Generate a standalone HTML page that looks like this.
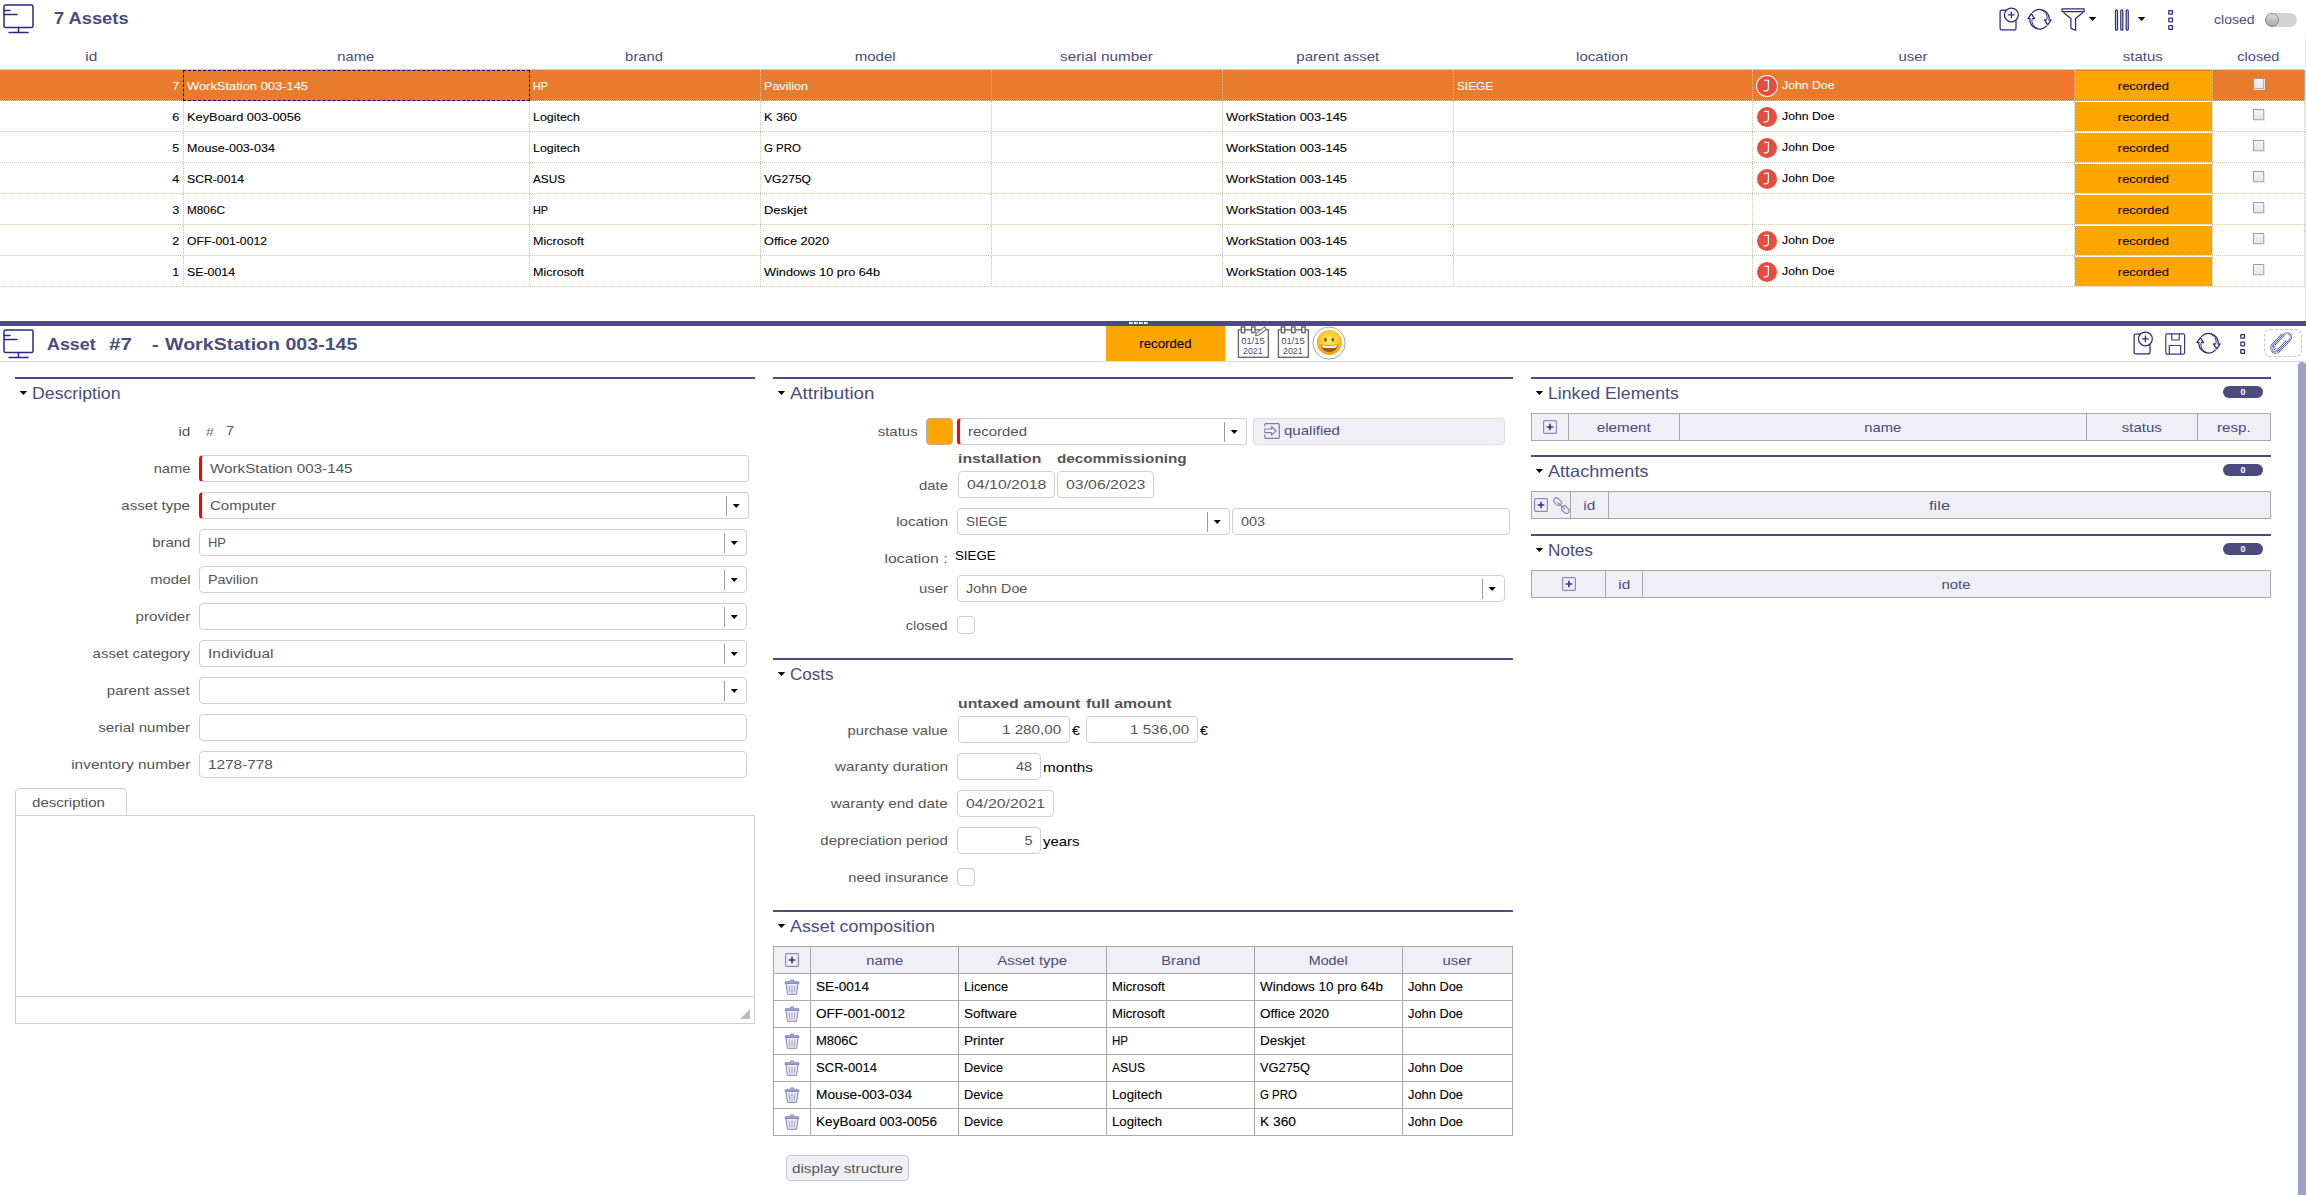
<!DOCTYPE html>
<html lang="en"><head><meta charset="utf-8"><title>Assets</title><style>
*{box-sizing:border-box;margin:0;padding:0}
html,body{width:2306px;height:1195px;overflow:hidden;background:#fff}
body{font-family:"Liberation Sans",sans-serif;color:#555;position:relative}
.abs{position:absolute}
.sx{display:inline-block;white-space:pre;transform-origin:0 50%}
.R{text-align:right} .R .sx{transform-origin:100% 50%}
.C{text-align:center} .C .sx{transform-origin:50% 50%}
.t{position:absolute;white-space:nowrap;line-height:20px;height:20px}
/* list */
.row{position:absolute;left:0;width:2305px;height:31px;border-bottom:1px dotted #cfc7ad;border-right:1px dotted #cfc7ad}
.row.sel{background:#e87b2c}
.cell{position:absolute;top:0;height:30px;line-height:30px;border-left:1px dotted #cfc7ad;padding-left:2.800px;color:#000;white-space:nowrap;overflow:hidden}
.row.sel .cell{color:#fff}
.cell.id{border-left:none;padding-right:3.800px;padding-left:0}
.st{position:absolute;left:2075px;top:1px;width:137px;height:29px;background:#ffa500;color:#000;line-height:28px}
.av{position:absolute;left:4px;top:6px;width:20px;height:20px;border-radius:50%;background:#e74c3c}
.row.sel .av{box-shadow:0 0 0 1px #fff}
.cb{position:absolute;left:2253px;top:8.300px;width:11px;height:11px;border:1px solid #b4b4b4;border-top-color:#9c9c9c;border-left-color:#9c9c9c;background:linear-gradient(#f4f4f4,#e6e6e6);box-shadow:1px 1px 0 #e4e4e4}
/* form */
.sec{position:absolute;height:2px;background:#4b4b80}
.tri{position:absolute;width:7.5px;height:4px;background:#000;clip-path:polygon(0 0,100% 0,50% 100%)}
.lbl{position:absolute;height:27px;line-height:28px;color:#555;white-space:nowrap}
.inp{position:absolute;height:27px;line-height:27px;border:1px solid #d0d0d0;border-radius:4px;background:#fff;color:#555;padding-left:8px;white-space:nowrap;overflow:hidden}
.inp.req{border-left:3px solid #f00;padding-left:8px}
.inp.R{padding-right:8px;padding-left:0}
.sep{position:absolute;top:3px;width:1px;height:20px;background:#999}
.dd{position:absolute;top:10.800px;width:7.5px;height:4.2px;background:#000;clip-path:polygon(0 0,100% 0,50% 100%)}
.chk{position:absolute;width:18px;height:18px;border:1px solid #ccc;border-radius:4px;background:#fff}
.tbl{position:absolute;border:1px solid #a8a8a8;background:#fff}
.th{position:absolute;color:#555;white-space:nowrap}
.vl{position:absolute;width:1px;background:#a8a8a8}
.hl{position:absolute;height:1px;background:#a8a8a8}
.td{position:absolute;color:#000;white-space:nowrap}
.badge{position:absolute;width:40px;height:12px;border-radius:6px;background:#4b4b80;color:#fff;font-size:9px;font-weight:bold;line-height:12px;text-align:center}
</style></head><body>
<svg class="abs" style="left:2.9px;top:4.2px" width="32" height="30" viewBox="0 0 32 30" fill="none" stroke="#2a2a80" stroke-width="1.5" stroke-linecap="round"><rect x="1" y="1" width="29" height="22.500" rx="1.500"/><path d="M1 6.500h6M1 10.500h13M15.500 23.500v5M6 28.500h19"/></svg>
<div class="t" style="left:53.8px;top:8.19px;color:#4b4b80"><span class="sx" style="font-size:16.48px;transform:scaleX(1.1105);font-weight:bold">7 Assets</span></div>
<svg class="abs" style="left:1998px;top:6px" width="24" height="26" viewBox="1998 6 24 26" fill="none" stroke="#2a2a80" stroke-width="1.25" ><g transform="translate(0 0)"><path d="M2006.100 10.100H2001.600a1.500 1.500 0 0 0-1.500 1.500V28.400a1.500 1.500 0 0 0 1.500 1.500H2014.500a1.500 1.500 0 0 0 1.500-1.500V20.300"/><circle cx="2011.400" cy="14.900" r="6.900"/><path d="M2011.400 11.600v6.600M2008.100 14.900h6.600"/></g></svg>
<svg class="abs" style="left:2026px;top:7px" width="27" height="25" viewBox="2026 7 27 25" fill="none" stroke="#2a2a80" stroke-width="1.25" ><g transform="translate(2039.5 19.25)" stroke-linecap="round"><path d="M-6.900 -6.900A9.750 9.750 0 0 1 9.700 -0.500"/><path d="M2.500 -9A7.600 7.600 0 0 1 7.600 -0.500" stroke-width="1"/><path d="M4.900 0.700h2.200M9.300 0.700h2.300L8.200 5.600 4.900 0.700" stroke-linejoin="round"/><g transform="rotate(180)"><path d="M-6.900 -6.900A9.750 9.750 0 0 1 9.700 -0.500"/><path d="M2.500 -9A7.600 7.600 0 0 1 7.600 -0.500" stroke-width="1"/><path d="M4.900 0.700h2.200M9.300 0.700h2.300L8.200 5.600 4.900 0.700" stroke-linejoin="round"/></g></g></svg>
<svg class="abs" style="left:2060px;top:6px" width="27" height="27" viewBox="2060 6 27 27" fill="none" stroke="#2a2a80" stroke-width="1.25" stroke-width="1.1"><path d="M2062.100 8.900h22v2.600h-22z" stroke-linejoin="round"/><path d="M2063.500 12.500l7.400 6.100v9.500l4.700 2.400v-11.900l7.400-6.100" stroke-linejoin="round"/></svg>
<div class="tri" style="left:2088.800px;top:17px"></div>
<svg class="abs" style="left:2113px;top:8px" width="18" height="25" viewBox="2113 8 18 25" fill="none" stroke="#2a2a80" stroke-width="1.25" stroke-width="1"><rect x="2115.5" y="9.900" width="2" height="20.300" rx="1"/><rect x="2120.8" y="9.900" width="2" height="20.300" rx="1"/><rect x="2126.2" y="9.900" width="2" height="20.300" rx="1"/></svg>
<div class="tri" style="left:2137.800px;top:17px"></div>
<svg class="abs" style="left:2166px;top:8px" width="10" height="24" viewBox="2166 8 10 24" fill="none" stroke="#2a2a80" stroke-width="1.25" ><g transform="translate(0 0)"><rect x="2168.800" y="10.5" width="3.700" height="3.700" rx=".4"/><rect x="2168.800" y="18.05" width="3.700" height="3.700" rx=".4"/><rect x="2168.800" y="25.6" width="3.700" height="3.700" rx=".4"/></g></svg>
<div class="t" style="left:2213.6px;top:9.36px;color:#4b4b80"><span class="sx" style="font-size:13.39px;transform:scaleX(1.0490)">closed</span></div>
<div class="abs" style="left:2265px;top:13px;width:32px;height:13.500px;border-radius:7px;background:#d3d3d3"></div>
<div class="abs" style="left:2264.500px;top:12.800px;width:14px;height:14px;border-radius:50%;background:linear-gradient(#dedede,#a6a6a6);border:1px solid #8c8c8c"></div>
<div class="t C" style="left:-108.5px;width:400px;top:46.06px;color:#4b4b80"><span class="sx" style="font-size:13.39px;transform:scaleX(1.1515)">id</span></div>
<div class="t C" style="left:156.0px;width:400px;top:46.06px;color:#4b4b80"><span class="sx" style="font-size:13.39px;transform:scaleX(1.1048)">name</span></div>
<div class="t C" style="left:444.5px;width:400px;top:46.06px;color:#4b4b80"><span class="sx" style="font-size:13.39px;transform:scaleX(1.1097)">brand</span></div>
<div class="t C" style="left:675.5px;width:400px;top:46.06px;color:#4b4b80"><span class="sx" style="font-size:13.39px;transform:scaleX(1.1243)">model</span></div>
<div class="t C" style="left:906.5px;width:400px;top:46.06px;color:#4b4b80"><span class="sx" style="font-size:13.39px;transform:scaleX(1.1466)">serial number</span></div>
<div class="t C" style="left:1137.5px;width:400px;top:46.06px;color:#4b4b80"><span class="sx" style="font-size:13.39px;transform:scaleX(1.1264)">parent asset</span></div>
<div class="t C" style="left:1402.5px;width:400px;top:46.06px;color:#4b4b80"><span class="sx" style="font-size:13.39px;transform:scaleX(1.1268)">location</span></div>
<div class="t C" style="left:1713.0px;width:400px;top:46.06px;color:#4b4b80"><span class="sx" style="font-size:13.39px;transform:scaleX(1.1134)">user</span></div>
<div class="t C" style="left:1943.0px;width:400px;top:46.06px;color:#4b4b80"><span class="sx" style="font-size:13.39px;transform:scaleX(1.1198)">status</span></div>
<div class="t C" style="left:2058.0px;width:400px;top:46.06px;color:#4b4b80"><span class="sx" style="font-size:13.39px;transform:scaleX(1.0852)">closed</span></div>
<div class="abs" style="left:0;top:69px;width:2304px;height:1px;background:#c8ccd4"></div>
<div class="abs" style="left:2305px;top:38px;width:1px;height:283px;background:#e4e4e4"></div>
<div class="row sel" style="top:70px"><div class="cell id R" style="left:0;width:183px"><span class="sx" style="font-size:11.33px;transform:scaleX(1.1110);-webkit-text-stroke:.1px">7</span></div><div class="cell" style="left:183px;width:346px"><span class="sx" style="font-size:11.33px;transform:scaleX(1.1391);-webkit-text-stroke:.1px">WorkStation 003-145</span></div><div class="cell" style="left:529px;width:231px"><span class="sx" style="font-size:11.33px;transform:scaleX(0.9530);-webkit-text-stroke:.1px">HP</span></div><div class="cell" style="left:760px;width:231px"><span class="sx" style="font-size:11.33px;transform:scaleX(1.1090);-webkit-text-stroke:.1px">Pavilion</span></div><div class="cell" style="left:991px;width:231px"></div><div class="cell" style="left:1222px;width:231px"></div><div class="cell" style="left:1453px;width:299px"><span class="sx" style="font-size:11.33px;transform:scaleX(1.0395);-webkit-text-stroke:.1px">SIEGE</span></div><div class="cell" style="left:1752px;width:322px"><div class="av"><svg width="20" height="20" viewBox="-10 -10 20 20" fill="none" stroke="#fff" stroke-width="1.25"><path d="M-2.800 -5.600h4.200v7.600q0 2.800-2.800 2.800h-2"/></svg></div><span style="position:absolute;left:28.600px;top:-1.100px"><span class="sx" style="font-size:11.33px;transform:scaleX(1.0825);-webkit-text-stroke:.1px">John Doe</span></span></div><div class="cell" style="left:2074px;width:138px"></div><div class="st C"><span class="sx" style="font-size:11.33px;transform:scaleX(1.1406);-webkit-text-stroke:.1px">recorded</span></div><div class="cell" style="left:2212px;width:92px"></div><div class="cb"></div><div class="abs" style="left:183px;top:0;width:347px;height:31px;border:1px solid #e87b2c"></div><div class="abs" style="left:183px;top:0;width:347px;height:31px;border:1px dashed #00008e"></div></div>
<div class="row" style="top:101px"><div class="cell id R" style="left:0;width:183px"><span class="sx" style="font-size:11.33px;transform:scaleX(1.1110);-webkit-text-stroke:.1px">6</span></div><div class="cell" style="left:183px;width:346px"><span class="sx" style="font-size:11.33px;transform:scaleX(1.1312);-webkit-text-stroke:.1px">KeyBoard 003-0056</span></div><div class="cell" style="left:529px;width:231px"><span class="sx" style="font-size:11.33px;transform:scaleX(1.0973);-webkit-text-stroke:.1px">Logitech</span></div><div class="cell" style="left:760px;width:231px"><span class="sx" style="font-size:11.33px;transform:scaleX(1.1146);-webkit-text-stroke:.1px">K 360</span></div><div class="cell" style="left:991px;width:231px"></div><div class="cell" style="left:1222px;width:231px"><span class="sx" style="font-size:11.33px;transform:scaleX(1.1391);-webkit-text-stroke:.1px">WorkStation 003-145</span></div><div class="cell" style="left:1453px;width:299px"></div><div class="cell" style="left:1752px;width:322px"><div class="av"><svg width="20" height="20" viewBox="-10 -10 20 20" fill="none" stroke="#fff" stroke-width="1.25"><path d="M-2.800 -5.600h4.200v7.600q0 2.800-2.800 2.800h-2"/></svg></div><span style="position:absolute;left:28.600px;top:-1.100px"><span class="sx" style="font-size:11.33px;transform:scaleX(1.0825);-webkit-text-stroke:.1px">John Doe</span></span></div><div class="cell" style="left:2074px;width:138px"></div><div class="st C"><span class="sx" style="font-size:11.33px;transform:scaleX(1.1406);-webkit-text-stroke:.1px">recorded</span></div><div class="cell" style="left:2212px;width:92px"></div><div class="cb"></div></div>
<div class="row" style="top:132px"><div class="cell id R" style="left:0;width:183px"><span class="sx" style="font-size:11.33px;transform:scaleX(1.1110);-webkit-text-stroke:.1px">5</span></div><div class="cell" style="left:183px;width:346px"><span class="sx" style="font-size:11.33px;transform:scaleX(1.1090);-webkit-text-stroke:.1px">Mouse-003-034</span></div><div class="cell" style="left:529px;width:231px"><span class="sx" style="font-size:11.33px;transform:scaleX(1.0973);-webkit-text-stroke:.1px">Logitech</span></div><div class="cell" style="left:760px;width:231px"><span class="sx" style="font-size:11.33px;transform:scaleX(1.0133);-webkit-text-stroke:.1px">G PRO</span></div><div class="cell" style="left:991px;width:231px"></div><div class="cell" style="left:1222px;width:231px"><span class="sx" style="font-size:11.33px;transform:scaleX(1.1391);-webkit-text-stroke:.1px">WorkStation 003-145</span></div><div class="cell" style="left:1453px;width:299px"></div><div class="cell" style="left:1752px;width:322px"><div class="av"><svg width="20" height="20" viewBox="-10 -10 20 20" fill="none" stroke="#fff" stroke-width="1.25"><path d="M-2.800 -5.600h4.200v7.600q0 2.800-2.800 2.800h-2"/></svg></div><span style="position:absolute;left:28.600px;top:-1.100px"><span class="sx" style="font-size:11.33px;transform:scaleX(1.0825);-webkit-text-stroke:.1px">John Doe</span></span></div><div class="cell" style="left:2074px;width:138px"></div><div class="st C"><span class="sx" style="font-size:11.33px;transform:scaleX(1.1406);-webkit-text-stroke:.1px">recorded</span></div><div class="cell" style="left:2212px;width:92px"></div><div class="cb"></div></div>
<div class="row" style="top:163px"><div class="cell id R" style="left:0;width:183px"><span class="sx" style="font-size:11.33px;transform:scaleX(1.1110);-webkit-text-stroke:.1px">4</span></div><div class="cell" style="left:183px;width:346px"><span class="sx" style="font-size:11.33px;transform:scaleX(1.0776);-webkit-text-stroke:.1px">SCR-0014</span></div><div class="cell" style="left:529px;width:231px"><span class="sx" style="font-size:11.33px;transform:scaleX(1.0371);-webkit-text-stroke:.1px">ASUS</span></div><div class="cell" style="left:760px;width:231px"><span class="sx" style="font-size:11.33px;transform:scaleX(1.0661);-webkit-text-stroke:.1px">VG275Q</span></div><div class="cell" style="left:991px;width:231px"></div><div class="cell" style="left:1222px;width:231px"><span class="sx" style="font-size:11.33px;transform:scaleX(1.1391);-webkit-text-stroke:.1px">WorkStation 003-145</span></div><div class="cell" style="left:1453px;width:299px"></div><div class="cell" style="left:1752px;width:322px"><div class="av"><svg width="20" height="20" viewBox="-10 -10 20 20" fill="none" stroke="#fff" stroke-width="1.25"><path d="M-2.800 -5.600h4.200v7.600q0 2.800-2.800 2.800h-2"/></svg></div><span style="position:absolute;left:28.600px;top:-1.100px"><span class="sx" style="font-size:11.33px;transform:scaleX(1.0825);-webkit-text-stroke:.1px">John Doe</span></span></div><div class="cell" style="left:2074px;width:138px"></div><div class="st C"><span class="sx" style="font-size:11.33px;transform:scaleX(1.1406);-webkit-text-stroke:.1px">recorded</span></div><div class="cell" style="left:2212px;width:92px"></div><div class="cb"></div></div>
<div class="row" style="top:194px"><div class="cell id R" style="left:0;width:183px"><span class="sx" style="font-size:11.33px;transform:scaleX(1.1110);-webkit-text-stroke:.1px">3</span></div><div class="cell" style="left:183px;width:346px"><span class="sx" style="font-size:11.33px;transform:scaleX(1.0405);-webkit-text-stroke:.1px">M806C</span></div><div class="cell" style="left:529px;width:231px"><span class="sx" style="font-size:11.33px;transform:scaleX(0.9530);-webkit-text-stroke:.1px">HP</span></div><div class="cell" style="left:760px;width:231px"><span class="sx" style="font-size:11.33px;transform:scaleX(1.1382);-webkit-text-stroke:.1px">Deskjet</span></div><div class="cell" style="left:991px;width:231px"></div><div class="cell" style="left:1222px;width:231px"><span class="sx" style="font-size:11.33px;transform:scaleX(1.1391);-webkit-text-stroke:.1px">WorkStation 003-145</span></div><div class="cell" style="left:1453px;width:299px"></div><div class="cell" style="left:1752px;width:322px"></div><div class="cell" style="left:2074px;width:138px"></div><div class="st C"><span class="sx" style="font-size:11.33px;transform:scaleX(1.1406);-webkit-text-stroke:.1px">recorded</span></div><div class="cell" style="left:2212px;width:92px"></div><div class="cb"></div></div>
<div class="row" style="top:225px"><div class="cell id R" style="left:0;width:183px"><span class="sx" style="font-size:11.33px;transform:scaleX(1.1110);-webkit-text-stroke:.1px">2</span></div><div class="cell" style="left:183px;width:346px"><span class="sx" style="font-size:11.33px;transform:scaleX(1.0767);-webkit-text-stroke:.1px">OFF-001-0012</span></div><div class="cell" style="left:529px;width:231px"><span class="sx" style="font-size:11.33px;transform:scaleX(1.1098);-webkit-text-stroke:.1px">Microsoft</span></div><div class="cell" style="left:760px;width:231px"><span class="sx" style="font-size:11.33px;transform:scaleX(1.1258);-webkit-text-stroke:.1px">Office 2020</span></div><div class="cell" style="left:991px;width:231px"></div><div class="cell" style="left:1222px;width:231px"><span class="sx" style="font-size:11.33px;transform:scaleX(1.1391);-webkit-text-stroke:.1px">WorkStation 003-145</span></div><div class="cell" style="left:1453px;width:299px"></div><div class="cell" style="left:1752px;width:322px"><div class="av"><svg width="20" height="20" viewBox="-10 -10 20 20" fill="none" stroke="#fff" stroke-width="1.25"><path d="M-2.800 -5.600h4.200v7.600q0 2.800-2.800 2.800h-2"/></svg></div><span style="position:absolute;left:28.600px;top:-1.100px"><span class="sx" style="font-size:11.33px;transform:scaleX(1.0825);-webkit-text-stroke:.1px">John Doe</span></span></div><div class="cell" style="left:2074px;width:138px"></div><div class="st C"><span class="sx" style="font-size:11.33px;transform:scaleX(1.1406);-webkit-text-stroke:.1px">recorded</span></div><div class="cell" style="left:2212px;width:92px"></div><div class="cb"></div></div>
<div class="row" style="top:256px"><div class="cell id R" style="left:0;width:183px"><span class="sx" style="font-size:11.33px;transform:scaleX(1.1110);-webkit-text-stroke:.1px">1</span></div><div class="cell" style="left:183px;width:346px"><span class="sx" style="font-size:11.33px;transform:scaleX(1.0887);-webkit-text-stroke:.1px">SE-0014</span></div><div class="cell" style="left:529px;width:231px"><span class="sx" style="font-size:11.33px;transform:scaleX(1.1098);-webkit-text-stroke:.1px">Microsoft</span></div><div class="cell" style="left:760px;width:231px"><span class="sx" style="font-size:11.33px;transform:scaleX(1.1232);-webkit-text-stroke:.1px">Windows 10 pro 64b</span></div><div class="cell" style="left:991px;width:231px"></div><div class="cell" style="left:1222px;width:231px"><span class="sx" style="font-size:11.33px;transform:scaleX(1.1391);-webkit-text-stroke:.1px">WorkStation 003-145</span></div><div class="cell" style="left:1453px;width:299px"></div><div class="cell" style="left:1752px;width:322px"><div class="av"><svg width="20" height="20" viewBox="-10 -10 20 20" fill="none" stroke="#fff" stroke-width="1.25"><path d="M-2.800 -5.600h4.200v7.600q0 2.800-2.800 2.800h-2"/></svg></div><span style="position:absolute;left:28.600px;top:-1.100px"><span class="sx" style="font-size:11.33px;transform:scaleX(1.0825);-webkit-text-stroke:.1px">John Doe</span></span></div><div class="cell" style="left:2074px;width:138px"></div><div class="st C"><span class="sx" style="font-size:11.33px;transform:scaleX(1.1406);-webkit-text-stroke:.1px">recorded</span></div><div class="cell" style="left:2212px;width:92px"></div><div class="cb"></div></div>
<div class="abs" style="left:0;top:321px;width:2306px;height:5px;background:#4b4b80"></div>
<div class="abs" style="left:1129px;top:322px;width:20px;height:2px;background:repeating-linear-gradient(90deg,#fff 0 2px,#d2d2cc 2px 4px,transparent 4px 5px)"></div>
<svg class="abs" style="left:3.1px;top:329.2px" width="32" height="30" viewBox="0 0 32 30" fill="none" stroke="#2a2a80" stroke-width="1.5" stroke-linecap="round"><rect x="1" y="1" width="29" height="22.500" rx="1.500"/><path d="M1 6.500h6M1 10.500h13M15.500 23.500v5M6 28.500h19"/></svg>
<div class="t" style="left:47px;top:334.29px;color:#4b4b80"><span class="sx" style="font-size:16.48px;transform:scaleX(1.0828);font-weight:bold">Asset</span></div>
<div class="t" style="left:108.8px;top:334.29px;color:#4b4b80"><span class="sx" style="font-size:16.48px;transform:scaleX(1.2549);font-weight:bold">#7</span></div>
<div class="t" style="left:151.6px;top:334.29px;color:#4b4b80"><span class="sx" style="font-size:16.48px;transform:scaleX(1.2028);font-weight:bold">-</span></div>
<div class="t" style="left:164.8px;top:334.29px;color:#4b4b80"><span class="sx" style="font-size:16.48px;transform:scaleX(1.1898);font-weight:bold">WorkStation 003-145</span></div>
<div class="abs" style="left:0;top:361px;width:2306px;height:1px;background:#dcdcec"></div>
<div class="abs" style="left:1106px;top:326px;width:119px;height:35px;background:#ffa500"></div>
<div class="t C" style="left:965.5px;width:400px;top:333.22px;color:#000"><span class="sx" style="font-size:12.36px;transform:scaleX(1.0702);-webkit-text-stroke:.1px">recorded</span></div>
<svg class="abs" style="left:1237px;top:326px" width="33" height="33" viewBox="0 0 33 33" fill="none" stroke="#6a6a6a" stroke-width="1.400"><rect x="1.400" y="3.800" width="30" height="27.500" fill="#fff"/><rect x="4.300" y=".9" width="3.400" height="5.800" fill="#fff"/><rect x="14.600" y=".9" width="3.400" height="5.800" fill="#fff"/><path d="M18.300 9.800L19.600 6.900 27.600 .9 29.400 3.300 21.400 9.300z" fill="#fff" stroke="#777" stroke-width="1.100" stroke-linejoin="round"/><text x="4.200" y="18.100" font-family="Liberation Sans" font-size="8.300" fill="#4b4b80" stroke="none" textLength="23.700" lengthAdjust="spacingAndGlyphs">01/15</text><text x="6" y="27.900" font-family="Liberation Sans" font-size="8.300" fill="#4b4b80" stroke="none" textLength="19.600" lengthAdjust="spacingAndGlyphs">2021</text></svg>
<svg class="abs" style="left:1277px;top:326px" width="33" height="33" viewBox="0 0 33 33" fill="none" stroke="#6a6a6a" stroke-width="1.400"><rect x="1.400" y="3.800" width="30" height="27.500" fill="#fff"/><rect x="4.300" y=".9" width="3.400" height="5.800" fill="#fff"/><rect x="14.600" y=".9" width="3.400" height="5.800" fill="#fff"/><rect x="24.800" y=".9" width="3.400" height="5.800" fill="#fff"/><text x="4.200" y="18.100" font-family="Liberation Sans" font-size="8.300" fill="#4b4b80" stroke="none" textLength="23.700" lengthAdjust="spacingAndGlyphs">01/15</text><text x="6" y="27.900" font-family="Liberation Sans" font-size="8.300" fill="#4b4b80" stroke="none" textLength="19.600" lengthAdjust="spacingAndGlyphs">2021</text></svg>
<svg class="abs" style="left:1311px;top:325px" width="36" height="36" viewBox="-1 -1 36 36"><defs><radialGradient id="sg" cx=".5" cy=".4" r=".62"><stop offset="0" stop-color="#fff06a"/><stop offset=".55" stop-color="#fccb28"/><stop offset=".85" stop-color="#f6a818"/><stop offset="1" stop-color="#e8900e"/></radialGradient></defs><circle cx="17.050" cy="17.050" r="16.100" fill="#fff" stroke="#a6a6a6" stroke-width="1"/><circle cx="17.300" cy="16.500" r="12.500" fill="url(#sg)"/><ellipse cx="13.500" cy="13.700" rx="1.350" ry="1.950" fill="#9a5000"/><ellipse cx="20.800" cy="13.700" rx="1.350" ry="1.950" fill="#9a5000"/><path d="M8.700 18.400c3 1.100 14.200 1.100 17.200 0-.6 5.300-4.300 7.500-8.600 7.500s-8-2.200-8.600-7.500z" fill="#a05a08"/><path d="M9.500 19c3 .9 12.600 .9 15.600 0-.2 1.300-.6 2-1.100 2.500-4 .8-9.400.8-13.400 0-.5-.5-.9-1.200-1.100-2.500z" fill="#f4f4f8"/></svg>
<svg class="abs" style="left:2132px;top:330px" width="24" height="26" viewBox="2132 330 24 26" fill="none" stroke="#2a2a80" stroke-width="1.25" ><g transform="translate(134 324)"><path d="M2006.100 10.100H2001.600a1.500 1.500 0 0 0-1.500 1.500V28.400a1.500 1.500 0 0 0 1.500 1.500H2014.500a1.500 1.500 0 0 0 1.500-1.500V20.300"/><circle cx="2011.400" cy="14.900" r="6.900"/><path d="M2011.400 11.600v6.600M2008.100 14.900h6.600"/></g></svg>
<svg class="abs" style="left:2164.5px;top:333px" width="21" height="22" viewBox="0 0 21 22" fill="none" stroke="#3a3a8c" stroke-width="1.200"><rect x=".8" y=".8" width="18.800" height="20.400" rx="1.500"/><path d="M6.800 1v6h7.400V1M4.300 21v-8.500h11.400V21"/></svg>
<svg class="abs" style="left:2195px;top:330.7px" width="27" height="25" viewBox="2195 330.7 27 25" fill="none" stroke="#2a2a80" stroke-width="1.25" ><g transform="translate(2208.5 342.95)" stroke-linecap="round"><path d="M-6.900 -6.900A9.750 9.750 0 0 1 9.700 -0.500"/><path d="M2.500 -9A7.600 7.600 0 0 1 7.600 -0.500" stroke-width="1"/><path d="M4.900 0.700h2.200M9.300 0.700h2.300L8.200 5.600 4.900 0.700" stroke-linejoin="round"/><g transform="rotate(180)"><path d="M-6.900 -6.900A9.750 9.750 0 0 1 9.700 -0.500"/><path d="M2.500 -9A7.600 7.600 0 0 1 7.600 -0.500" stroke-width="1"/><path d="M4.900 0.700h2.200M9.300 0.700h2.300L8.200 5.600 4.900 0.700" stroke-linejoin="round"/></g></g></svg>
<svg class="abs" style="left:2238px;top:332px" width="10" height="24" viewBox="2238 332 10 24" fill="none" stroke="#2a2a80" stroke-width="1.25" ><g transform="translate(72 324)"><rect x="2168.800" y="10.5" width="3.700" height="3.700" rx=".4"/><rect x="2168.800" y="18.05" width="3.700" height="3.700" rx=".4"/><rect x="2168.800" y="25.6" width="3.700" height="3.700" rx=".4"/></g></svg>
<div class="abs" style="left:2264px;top:329px;width:38px;height:28px;border:1px dashed #c4c4c4;border-radius:6px"></div>
<svg class="abs" style="left:2264px;top:328px" width="40" height="30" viewBox="2264 328 40 30" fill="none" stroke-linecap="butt"><g transform="rotate(-2 2281 343)"><path d="M2282.500 334.500L2272.250 344.750A4.600 4.600 0 0 0 2278.750 351.250L2290 340A3.890 3.890 0 0 0 2284.500 334.500L2274.750 344.250A3.180 3.180 0 0 0 2279.250 348.750L2286.750 341.250" stroke="#3f3f9a" stroke-width="2.100"/><path d="M2282.500 334.500L2272.250 344.750A4.600 4.600 0 0 0 2278.750 351.250L2290 340A3.890 3.890 0 0 0 2284.500 334.500L2274.750 344.250A3.180 3.180 0 0 0 2279.250 348.750L2286.750 341.250" stroke="#fff" stroke-width=".95"/></g></svg>
<div class="abs" style="left:2298px;top:362px;width:8px;height:833px;background:#a0a0c5;border-radius:4px 4px 0 0"></div>
<div class="sec" style="left:15px;top:377px;width:740px"></div>
<div class="tri" style="left:19.7px;top:390.9px"></div>
<div class="t" style="left:31.9px;top:382.89px;color:#4b4b80"><span class="sx" style="font-size:16.48px;transform:scaleX(1.0749)">Description</span></div>
<div class="t R" style="left:-210px;width:400px;top:421.36px;color:#555"><span class="sx" style="font-size:13.39px;transform:scaleX(1.1515)">id</span></div>
<div class="t" style="left:205.7px;top:421.07px;color:#777"><span class="sx" style="font-size:11.33px;transform:scaleX(1.2221);-webkit-text-stroke:.1px">#</span></div>
<div class="t" style="left:225.5px;top:420.46px;color:#555"><span class="sx" style="font-size:13.39px;transform:scaleX(1.0744)">7</span></div>
<div class="t R" style="left:-210px;width:400px;top:457.86px;color:#555"><span class="sx" style="font-size:13.39px;transform:scaleX(1.0988)">name</span></div>
<div class="inp req" style="left:199px;top:455.0px;width:550px;line-height:24.700px"><span class="sx" style="font-size:13.39px;transform:scaleX(1.1367)">WorkStation 003-145</span></div>
<div class="t R" style="left:-210px;width:400px;top:494.86px;color:#555"><span class="sx" style="font-size:13.39px;transform:scaleX(1.1257)">asset type</span></div>
<div class="inp req" style="left:199px;top:492.0px;width:550px;line-height:24.700px"><span class="sx" style="font-size:13.39px;transform:scaleX(1.1210)">Computer</span><div class="sep" style="left:523.8px"></div><div class="dd" style="left:530.5px"></div></div>
<div class="t R" style="left:-210px;width:400px;top:531.86px;color:#555"><span class="sx" style="font-size:13.39px;transform:scaleX(1.1126)">brand</span></div>
<div class="inp" style="left:199px;top:529.0px;width:548px;line-height:24.700px"><span class="sx" style="font-size:13.39px;transform:scaleX(0.9677)">HP</span><div class="sep" style="left:523.8px"></div><div class="dd" style="left:530.5px"></div></div>
<div class="t R" style="left:-210px;width:400px;top:568.86px;color:#555"><span class="sx" style="font-size:13.39px;transform:scaleX(1.1024)">model</span></div>
<div class="inp" style="left:199px;top:566.0px;width:548px;line-height:24.700px"><span class="sx" style="font-size:13.39px;transform:scaleX(1.0727)">Pavilion</span><div class="sep" style="left:523.8px"></div><div class="dd" style="left:530.5px"></div></div>
<div class="t R" style="left:-210px;width:400px;top:605.86px;color:#555"><span class="sx" style="font-size:13.39px;transform:scaleX(1.1329)">provider</span></div>
<div class="inp" style="left:199px;top:603.0px;width:548px;line-height:24.700px"><div class="sep" style="left:523.8px"></div><div class="dd" style="left:530.5px"></div></div>
<div class="t R" style="left:-210px;width:400px;top:642.86px;color:#555"><span class="sx" style="font-size:13.39px;transform:scaleX(1.1197)">asset category</span></div>
<div class="inp" style="left:199px;top:640.0px;width:548px;line-height:24.700px"><span class="sx" style="font-size:13.39px;transform:scaleX(1.1596)">Individual</span><div class="sep" style="left:523.8px"></div><div class="dd" style="left:530.5px"></div></div>
<div class="t R" style="left:-210px;width:400px;top:679.86px;color:#555"><span class="sx" style="font-size:13.39px;transform:scaleX(1.1251)">parent asset</span></div>
<div class="inp" style="left:199px;top:677.0px;width:548px;line-height:24.700px"><div class="sep" style="left:523.8px"></div><div class="dd" style="left:530.5px"></div></div>
<div class="t R" style="left:-210px;width:400px;top:716.86px;color:#555"><span class="sx" style="font-size:13.39px;transform:scaleX(1.1330)">serial number</span></div>
<div class="inp" style="left:199px;top:714.0px;width:548px;line-height:24.700px"></div>
<div class="t R" style="left:-210px;width:400px;top:753.86px;color:#555"><span class="sx" style="font-size:13.39px;transform:scaleX(1.1533)">inventory number</span></div>
<div class="inp" style="left:199px;top:751.0px;width:548px;line-height:24.700px"><span class="sx" style="font-size:13.39px;transform:scaleX(1.1470)">1278-778</span></div>
<div class="abs" style="left:15px;top:788px;width:112px;height:28px;border:1px solid #d0d0d0;border-bottom:none;border-radius:5px 5px 0 0;background:#fff"></div>
<div class="t" style="left:32px;top:792.16px;color:#555"><span class="sx" style="font-size:13.39px;transform:scaleX(1.1274)">description</span></div>
<div class="abs" style="left:15px;top:815px;width:740px;height:209px;border:1px solid #d0d0d0"></div>
<div class="abs" style="left:16px;top:996px;width:738px;height:1px;background:#d0d0d0"></div>
<div class="abs" style="left:740px;top:1009px;width:0;height:0;border-left:10px solid transparent;border-bottom:10px solid #bdbdbd"></div>
<div class="sec" style="left:773px;top:377px;width:740px"></div>
<div class="tri" style="left:777.7px;top:390.9px"></div>
<div class="t" style="left:789.9px;top:382.89px;color:#4b4b80"><span class="sx" style="font-size:16.48px;transform:scaleX(1.1389)">Attribution</span></div>
<div class="t R" style="left:518px;width:400px;top:420.86px;color:#555"><span class="sx" style="font-size:13.39px;transform:scaleX(1.1198)">status</span></div>
<div class="abs" style="left:926px;top:418px;width:27px;height:27px;border-radius:4px;background:#ffa500;border:1px solid #b9b09c"></div>
<div class="inp req" style="left:957px;top:418.0px;width:290px;line-height:24.700px"><span class="sx" style="font-size:13.39px;transform:scaleX(1.1165)">recorded</span><div class="sep" style="left:263.8px"></div><div class="dd" style="left:270.5px"></div></div>
<div class="abs" style="left:1253px;top:418px;width:252px;height:27px;border-radius:4px;background:#f0eff6;border:1px solid #dcdce4"></div>
<svg class="abs" style="left:1263.7px;top:422.7px" width="17" height="17" viewBox="0 0 17 17" fill="none" stroke="#7c7cb4" stroke-width="1.200" stroke-linejoin="round"><path d="M.8 3.600V1.700a1 1 0 0 1 1-1H14.300a1 1 0 0 1 1 1V14.300a1 1 0 0 1-1 1H1.800a1 1 0 0 1-1-1V11.600"/><path d="M1.900 6H7.600V3.700L12.100 7.900 7.600 12.100V9.700H1.900a1.850 1.850 0 0 1 0-3.700z"/></svg>
<div class="t" style="left:1284px;top:420.36px;color:#4b4b80"><span class="sx" style="font-size:13.39px;transform:scaleX(1.1228)">qualified</span></div>
<div class="t" style="left:958px;top:448.06px;color:#555"><span class="sx" style="font-size:13.39px;transform:scaleX(1.1815);font-weight:bold">installation</span></div>
<div class="t" style="left:1057px;top:448.06px;color:#555"><span class="sx" style="font-size:13.39px;transform:scaleX(1.1394);font-weight:bold">decommissioning</span></div>
<div class="t R" style="left:548px;width:400px;top:474.86px;color:#555"><span class="sx" style="font-size:13.39px;transform:scaleX(1.1129)">date</span></div>
<div class="inp" style="left:958px;top:471.0px;width:97px;line-height:24.700px"><span class="sx" style="font-size:13.39px;transform:scaleX(1.1864)">04/10/2018</span></div>
<div class="inp" style="left:1057px;top:471.0px;width:97px;line-height:24.700px"><span class="sx" style="font-size:13.39px;transform:scaleX(1.1864)">03/06/2023</span></div>
<div class="t R" style="left:548px;width:400px;top:510.86px;color:#555"><span class="sx" style="font-size:13.39px;transform:scaleX(1.1268)">location</span></div>
<div class="inp" style="left:957px;top:508.0px;width:273px;line-height:24.700px"><span class="sx" style="font-size:13.39px;transform:scaleX(1.0115)">SIEGE</span><div class="sep" style="left:248.8px"></div><div class="dd" style="left:255.5px"></div></div>
<div class="inp" style="left:1232px;top:508.0px;width:278px;line-height:24.700px"><span class="sx" style="font-size:13.39px;transform:scaleX(1.0744)">003</span></div>
<div class="t R" style="left:548px;width:400px;top:548.36px;color:#555"><span class="sx" style="font-size:13.39px;transform:scaleX(1.1756)">location :</span></div>
<div class="t" style="left:954.7px;top:545.06px;color:#000"><span class="sx" style="font-size:13.39px;transform:scaleX(0.9944)">SIEGE</span></div>
<div class="t R" style="left:548px;width:400px;top:577.86px;color:#555"><span class="sx" style="font-size:13.39px;transform:scaleX(1.1134)">user</span></div>
<div class="inp" style="left:957px;top:575.0px;width:548px;line-height:24.700px"><span class="sx" style="font-size:13.39px;transform:scaleX(1.0713)">John Doe</span><div class="sep" style="left:523.8px"></div><div class="dd" style="left:530.5px"></div></div>
<div class="t R" style="left:548px;width:400px;top:615.36px;color:#555"><span class="sx" style="font-size:13.39px;transform:scaleX(1.0852)">closed</span></div>
<div class="chk" style="left:957px;top:616px"></div>
<div class="sec" style="left:773px;top:658px;width:740px"></div>
<div class="tri" style="left:777.7px;top:671.9px"></div>
<div class="t" style="left:789.9px;top:663.89px;color:#4b4b80"><span class="sx" style="font-size:16.48px;transform:scaleX(1.0327)">Costs</span></div>
<div class="t" style="left:958px;top:693.06px;color:#555"><span class="sx" style="font-size:13.39px;transform:scaleX(1.1847);font-weight:bold">untaxed amount</span></div>
<div class="t" style="left:1086.2px;top:693.06px;color:#555"><span class="sx" style="font-size:13.39px;transform:scaleX(1.1851);font-weight:bold">full amount</span></div>
<div class="t R" style="left:548px;width:400px;top:720.36px;color:#555"><span class="sx" style="font-size:13.39px;transform:scaleX(1.1034)">purchase value</span></div>
<div class="inp R" style="left:958px;top:716.0px;width:112px;line-height:24.700px"><span class="sx" style="font-size:13.39px;transform:scaleX(1.1340)">1 280,00</span></div>
<div class="t" style="left:1072px;top:720.36px;color:#000"><span class="sx" style="font-size:13.39px;transform:scaleX(1.0744)">€</span></div>
<div class="inp R" style="left:1086px;top:716.0px;width:112px;line-height:24.700px"><span class="sx" style="font-size:13.39px;transform:scaleX(1.1340)">1 536,00</span></div>
<div class="t" style="left:1200px;top:720.36px;color:#000"><span class="sx" style="font-size:13.39px;transform:scaleX(1.0744)">€</span></div>
<div class="t R" style="left:548px;width:400px;top:755.86px;color:#555"><span class="sx" style="font-size:13.39px;transform:scaleX(1.1406)">waranty duration</span></div>
<div class="inp R" style="left:957px;top:753.0px;width:84px;line-height:24.700px"><span class="sx" style="font-size:13.39px;transform:scaleX(1.0744)">48</span></div>
<div class="t" style="left:1043px;top:757.36px;color:#000"><span class="sx" style="font-size:13.39px;transform:scaleX(1.1388)">months</span></div>
<div class="t R" style="left:548px;width:400px;top:792.86px;color:#555"><span class="sx" style="font-size:13.39px;transform:scaleX(1.1390)">waranty end date</span></div>
<div class="inp" style="left:957px;top:790.0px;width:97px;line-height:24.700px"><span class="sx" style="font-size:13.39px;transform:scaleX(1.1804)">04/20/2021</span></div>
<div class="t R" style="left:548px;width:400px;top:829.86px;color:#555"><span class="sx" style="font-size:13.39px;transform:scaleX(1.1204)">depreciation period</span></div>
<div class="inp R" style="left:957px;top:827.0px;width:84px;line-height:24.700px"><span class="sx" style="font-size:13.39px;transform:scaleX(1.0744)">5</span></div>
<div class="t" style="left:1043px;top:831.36px;color:#000"><span class="sx" style="font-size:13.39px;transform:scaleX(1.1179)">years</span></div>
<div class="t R" style="left:548px;width:400px;top:867.36px;color:#555"><span class="sx" style="font-size:13.39px;transform:scaleX(1.0944)">need insurance</span></div>
<div class="chk" style="left:957px;top:868px"></div>
<div class="sec" style="left:773px;top:910px;width:740px"></div>
<div class="tri" style="left:777.7px;top:923.9px"></div>
<div class="t" style="left:789.9px;top:915.89px;color:#4b4b80"><span class="sx" style="font-size:16.48px;transform:scaleX(1.0843)">Asset composition</span></div>
<div class="tbl" style="left:773px;top:946px;width:740px;height:190px"></div>
<div class="abs" style="left:774px;top:947px;width:738px;height:26px;background:#f0eff6"></div>
<div class="vl" style="left:810px;top:946px;height:190px"></div>
<div class="t C" style="left:684.5px;width:400px;top:949.66px;color:#4b4b80"><span class="sx" style="font-size:13.39px;transform:scaleX(1.1048)">name</span></div>
<div class="vl" style="left:958px;top:946px;height:190px"></div>
<div class="t C" style="left:832.5px;width:400px;top:949.66px;color:#4b4b80"><span class="sx" style="font-size:13.39px;transform:scaleX(1.1197)">Asset type</span></div>
<div class="vl" style="left:1106px;top:946px;height:190px"></div>
<div class="t C" style="left:980.5px;width:400px;top:949.66px;color:#4b4b80"><span class="sx" style="font-size:13.39px;transform:scaleX(1.0916)">Brand</span></div>
<div class="vl" style="left:1254px;top:946px;height:190px"></div>
<div class="t C" style="left:1128.5px;width:400px;top:949.66px;color:#4b4b80"><span class="sx" style="font-size:13.39px;transform:scaleX(1.0695)">Model</span></div>
<div class="vl" style="left:1402px;top:946px;height:190px"></div>
<div class="t C" style="left:1257.5px;width:400px;top:949.66px;color:#4b4b80"><span class="sx" style="font-size:13.39px;transform:scaleX(1.1134)">user</span></div>
<svg class="abs" style="left:785px;top:953px" width="14" height="14" viewBox="0 0 14 14" fill="none" stroke="#33338a" stroke-width="1"><rect x=".6" y=".6" width="12.800" height="12.800" rx="1" stroke="#8c8cc0" stroke-width="1.200"/><path d="M7 3.700v6.600M3.700 7h6.600" stroke-width="1.600"/></svg>
<div class="hl" style="left:773px;top:973px;width:740px"></div>
<svg class="abs" style="left:784px;top:979px" width="16" height="17" viewBox="0 0 16 17" fill="none" stroke="#8484bc" stroke-width="1"><path d="M6.300 2.200c0-1.700 3.400-1.700 3.400 0" stroke-width="1.200"/><path d="M1.200 2.800h13.600v1.800H1.200z" fill="#a9a9d2"/><path d="M2 5l1.400 10.300h9.200L14 5" fill="#ececf7" stroke-linejoin="round"/><path d="M5 6.500l.8 7M8 6.500v7M11 6.500l-.8 7" stroke="#9a9ac8"/></svg>
<div class="t" style="left:816.2px;top:976.02px;color:#000"><span class="sx" style="font-size:12.36px;transform:scaleX(1.1019);-webkit-text-stroke:.1px">SE-0014</span></div>
<div class="t" style="left:964.2px;top:976.02px;color:#000"><span class="sx" style="font-size:12.36px;transform:scaleX(1.0329);-webkit-text-stroke:.1px">Licence</span></div>
<div class="t" style="left:1112.2px;top:976.02px;color:#000"><span class="sx" style="font-size:12.36px;transform:scaleX(1.0572);-webkit-text-stroke:.1px">Microsoft</span></div>
<div class="t" style="left:1260.2px;top:976.02px;color:#000"><span class="sx" style="font-size:12.36px;transform:scaleX(1.0917);-webkit-text-stroke:.1px">Windows 10 pro 64b</span></div>
<div class="t" style="left:1408.2px;top:976.02px;color:#000"><span class="sx" style="font-size:12.36px;transform:scaleX(1.0396);-webkit-text-stroke:.1px">John Doe</span></div>
<div class="hl" style="left:773px;top:1000px;width:740px"></div>
<svg class="abs" style="left:784px;top:1006px" width="16" height="17" viewBox="0 0 16 17" fill="none" stroke="#8484bc" stroke-width="1"><path d="M6.300 2.200c0-1.700 3.400-1.700 3.400 0" stroke-width="1.200"/><path d="M1.200 2.800h13.600v1.800H1.200z" fill="#a9a9d2"/><path d="M2 5l1.400 10.300h9.200L14 5" fill="#ececf7" stroke-linejoin="round"/><path d="M5 6.500l.8 7M8 6.500v7M11 6.500l-.8 7" stroke="#9a9ac8"/></svg>
<div class="t" style="left:816.2px;top:1003.02px;color:#000"><span class="sx" style="font-size:12.36px;transform:scaleX(1.0980);-webkit-text-stroke:.1px">OFF-001-0012</span></div>
<div class="t" style="left:964.2px;top:1003.02px;color:#000"><span class="sx" style="font-size:12.36px;transform:scaleX(1.0867);-webkit-text-stroke:.1px">Software</span></div>
<div class="t" style="left:1112.2px;top:1003.02px;color:#000"><span class="sx" style="font-size:12.36px;transform:scaleX(1.0572);-webkit-text-stroke:.1px">Microsoft</span></div>
<div class="t" style="left:1260.2px;top:1003.02px;color:#000"><span class="sx" style="font-size:12.36px;transform:scaleX(1.0955);-webkit-text-stroke:.1px">Office 2020</span></div>
<div class="t" style="left:1408.2px;top:1003.02px;color:#000"><span class="sx" style="font-size:12.36px;transform:scaleX(1.0396);-webkit-text-stroke:.1px">John Doe</span></div>
<div class="hl" style="left:773px;top:1027px;width:740px"></div>
<svg class="abs" style="left:784px;top:1033px" width="16" height="17" viewBox="0 0 16 17" fill="none" stroke="#8484bc" stroke-width="1"><path d="M6.300 2.200c0-1.700 3.400-1.700 3.400 0" stroke-width="1.200"/><path d="M1.200 2.800h13.600v1.800H1.200z" fill="#a9a9d2"/><path d="M2 5l1.400 10.300h9.200L14 5" fill="#ececf7" stroke-linejoin="round"/><path d="M5 6.500l.8 7M8 6.500v7M11 6.500l-.8 7" stroke="#9a9ac8"/></svg>
<div class="t" style="left:816.2px;top:1030.02px;color:#000"><span class="sx" style="font-size:12.36px;transform:scaleX(1.0542);-webkit-text-stroke:.1px">M806C</span></div>
<div class="t" style="left:964.2px;top:1030.02px;color:#000"><span class="sx" style="font-size:12.36px;transform:scaleX(1.0988);-webkit-text-stroke:.1px">Printer</span></div>
<div class="t" style="left:1112.2px;top:1030.02px;color:#000"><span class="sx" style="font-size:12.36px;transform:scaleX(0.9318);-webkit-text-stroke:.1px">HP</span></div>
<div class="t" style="left:1260.2px;top:1030.02px;color:#000"><span class="sx" style="font-size:12.36px;transform:scaleX(1.0919);-webkit-text-stroke:.1px">Deskjet</span></div>
<div class="hl" style="left:773px;top:1054px;width:740px"></div>
<svg class="abs" style="left:784px;top:1060px" width="16" height="17" viewBox="0 0 16 17" fill="none" stroke="#8484bc" stroke-width="1"><path d="M6.300 2.200c0-1.700 3.400-1.700 3.400 0" stroke-width="1.200"/><path d="M1.200 2.800h13.600v1.800H1.200z" fill="#a9a9d2"/><path d="M2 5l1.400 10.300h9.200L14 5" fill="#ececf7" stroke-linejoin="round"/><path d="M5 6.500l.8 7M8 6.500v7M11 6.500l-.8 7" stroke="#9a9ac8"/></svg>
<div class="t" style="left:816.2px;top:1057.02px;color:#000"><span class="sx" style="font-size:12.36px;transform:scaleX(1.0571);-webkit-text-stroke:.1px">SCR-0014</span></div>
<div class="t" style="left:964.2px;top:1057.02px;color:#000"><span class="sx" style="font-size:12.36px;transform:scaleX(1.0323);-webkit-text-stroke:.1px">Device</span></div>
<div class="t" style="left:1112.2px;top:1057.02px;color:#000"><span class="sx" style="font-size:12.36px;transform:scaleX(0.9804);-webkit-text-stroke:.1px">ASUS</span></div>
<div class="t" style="left:1260.2px;top:1057.02px;color:#000"><span class="sx" style="font-size:12.36px;transform:scaleX(1.0397);-webkit-text-stroke:.1px">VG275Q</span></div>
<div class="t" style="left:1408.2px;top:1057.02px;color:#000"><span class="sx" style="font-size:12.36px;transform:scaleX(1.0396);-webkit-text-stroke:.1px">John Doe</span></div>
<div class="hl" style="left:773px;top:1081px;width:740px"></div>
<svg class="abs" style="left:784px;top:1087px" width="16" height="17" viewBox="0 0 16 17" fill="none" stroke="#8484bc" stroke-width="1"><path d="M6.300 2.200c0-1.700 3.400-1.700 3.400 0" stroke-width="1.200"/><path d="M1.200 2.800h13.600v1.800H1.200z" fill="#a9a9d2"/><path d="M2 5l1.400 10.300h9.200L14 5" fill="#ececf7" stroke-linejoin="round"/><path d="M5 6.500l.8 7M8 6.500v7M11 6.500l-.8 7" stroke="#9a9ac8"/></svg>
<div class="t" style="left:816.2px;top:1084.02px;color:#000"><span class="sx" style="font-size:12.36px;transform:scaleX(1.1090);-webkit-text-stroke:.1px">Mouse-003-034</span></div>
<div class="t" style="left:964.2px;top:1084.02px;color:#000"><span class="sx" style="font-size:12.36px;transform:scaleX(1.0323);-webkit-text-stroke:.1px">Device</span></div>
<div class="t" style="left:1112.2px;top:1084.02px;color:#000"><span class="sx" style="font-size:12.36px;transform:scaleX(1.0701);-webkit-text-stroke:.1px">Logitech</span></div>
<div class="t" style="left:1260.2px;top:1084.02px;color:#000"><span class="sx" style="font-size:12.36px;transform:scaleX(0.9289);-webkit-text-stroke:.1px">G PRO</span></div>
<div class="t" style="left:1408.2px;top:1084.02px;color:#000"><span class="sx" style="font-size:12.36px;transform:scaleX(1.0396);-webkit-text-stroke:.1px">John Doe</span></div>
<div class="hl" style="left:773px;top:1108px;width:740px"></div>
<svg class="abs" style="left:784px;top:1114px" width="16" height="17" viewBox="0 0 16 17" fill="none" stroke="#8484bc" stroke-width="1"><path d="M6.300 2.200c0-1.700 3.400-1.700 3.400 0" stroke-width="1.200"/><path d="M1.200 2.800h13.600v1.800H1.200z" fill="#a9a9d2"/><path d="M2 5l1.400 10.300h9.200L14 5" fill="#ececf7" stroke-linejoin="round"/><path d="M5 6.500l.8 7M8 6.500v7M11 6.500l-.8 7" stroke="#9a9ac8"/></svg>
<div class="t" style="left:816.2px;top:1111.02px;color:#000"><span class="sx" style="font-size:12.36px;transform:scaleX(1.1006);-webkit-text-stroke:.1px">KeyBoard 003-0056</span></div>
<div class="t" style="left:964.2px;top:1111.02px;color:#000"><span class="sx" style="font-size:12.36px;transform:scaleX(1.0323);-webkit-text-stroke:.1px">Device</span></div>
<div class="t" style="left:1112.2px;top:1111.02px;color:#000"><span class="sx" style="font-size:12.36px;transform:scaleX(1.0701);-webkit-text-stroke:.1px">Logitech</span></div>
<div class="t" style="left:1260.2px;top:1111.02px;color:#000"><span class="sx" style="font-size:12.36px;transform:scaleX(1.1146);-webkit-text-stroke:.1px">K 360</span></div>
<div class="t" style="left:1408.2px;top:1111.02px;color:#000"><span class="sx" style="font-size:12.36px;transform:scaleX(1.0396);-webkit-text-stroke:.1px">John Doe</span></div>
<div class="abs" style="left:786px;top:1155px;width:123px;height:26px;border:1px solid #c8c8d0;border-radius:4px;background:#f0eff6"></div>
<div class="t" style="left:791.7px;top:1157.86px;color:#555"><span class="sx" style="font-size:13.39px;transform:scaleX(1.1407)">display structure</span></div>
<div class="sec" style="left:1531px;top:377px;width:740px"></div>
<div class="tri" style="left:1535.7px;top:390.9px"></div>
<div class="t" style="left:1547.9px;top:382.89px;color:#4b4b80"><span class="sx" style="font-size:16.48px;transform:scaleX(1.0744)">Linked Elements</span></div>
<div class="badge" style="left:2223px;top:386px">0</div>
<div class="tbl" style="left:1531px;top:413px;width:740px;height:28px;background:#f0eff6"></div>
<div class="vl" style="left:1568px;top:413px;height:28px"></div>
<div class="t C" style="left:1424.0px;width:400px;top:417.16px;color:#4b4b80"><span class="sx" style="font-size:13.39px;transform:scaleX(1.1337)">element</span></div>
<div class="vl" style="left:1679px;top:413px;height:28px"></div>
<div class="t C" style="left:1683.0px;width:400px;top:417.16px;color:#4b4b80"><span class="sx" style="font-size:13.39px;transform:scaleX(1.1048)">name</span></div>
<div class="vl" style="left:2086px;top:413px;height:28px"></div>
<div class="t C" style="left:1942.0px;width:400px;top:417.16px;color:#4b4b80"><span class="sx" style="font-size:13.39px;transform:scaleX(1.1198)">status</span></div>
<div class="vl" style="left:2197px;top:413px;height:28px"></div>
<div class="t C" style="left:2034.0px;width:400px;top:417.16px;color:#4b4b80"><span class="sx" style="font-size:13.39px;transform:scaleX(1.1423)">resp.</span></div>
<svg class="abs" style="left:1543px;top:420px" width="14" height="14" viewBox="0 0 14 14" fill="none" stroke="#33338a" stroke-width="1"><rect x=".6" y=".6" width="12.800" height="12.800" rx="1" stroke="#8c8cc0" stroke-width="1.200"/><path d="M7 3.700v6.600M3.700 7h6.600" stroke-width="1.600"/></svg>
<div class="sec" style="left:1531px;top:455px;width:740px"></div>
<div class="tri" style="left:1535.7px;top:468.9px"></div>
<div class="t" style="left:1547.9px;top:460.89px;color:#4b4b80"><span class="sx" style="font-size:16.48px;transform:scaleX(1.0972)">Attachments</span></div>
<div class="badge" style="left:2223px;top:464px">0</div>
<div class="tbl" style="left:1531px;top:491px;width:740px;height:28px;background:#f0eff6"></div>
<div class="vl" style="left:1570px;top:491px;height:28px"></div>
<div class="t C" style="left:1389.5px;width:400px;top:495.16px;color:#4b4b80"><span class="sx" style="font-size:13.39px;transform:scaleX(1.1515)">id</span></div>
<div class="vl" style="left:1608px;top:491px;height:28px"></div>
<div class="t C" style="left:1739.5px;width:400px;top:495.16px;color:#4b4b80"><span class="sx" style="font-size:13.39px;transform:scaleX(1.2269)">file</span></div>
<svg class="abs" style="left:1534px;top:498px" width="14" height="14" viewBox="0 0 14 14" fill="none" stroke="#33338a" stroke-width="1"><rect x=".6" y=".6" width="12.800" height="12.800" rx="1" stroke="#8c8cc0" stroke-width="1.200"/><path d="M7 3.700v6.600M3.700 7h6.600" stroke-width="1.600"/></svg>
<svg class="abs" style="left:1551.5px;top:496.5px" width="18" height="17" viewBox="0 0 18 17" fill="none" stroke="#8484bc" stroke-width="1.100"><rect x="-2" y="-3.200" width="8.500" height="5.400" rx="2.700" transform="translate(3.600 3.400) rotate(45)"/><rect x="-2" y="-3.200" width="8.500" height="5.400" rx="2.700" transform="translate(11.400 11.400) rotate(45)"/><path d="M5.800 5.400l7 7"/></svg>
<div class="sec" style="left:1531px;top:534px;width:740px"></div>
<div class="tri" style="left:1535.7px;top:547.9px"></div>
<div class="t" style="left:1547.9px;top:539.89px;color:#4b4b80"><span class="sx" style="font-size:16.48px;transform:scaleX(1.0453)">Notes</span></div>
<div class="badge" style="left:2223px;top:543px">0</div>
<div class="tbl" style="left:1531px;top:570px;width:740px;height:28px;background:#f0eff6"></div>
<div class="vl" style="left:1605px;top:570px;height:28px"></div>
<div class="t C" style="left:1424.0px;width:400px;top:574.16px;color:#4b4b80"><span class="sx" style="font-size:13.39px;transform:scaleX(1.1515)">id</span></div>
<div class="vl" style="left:1642px;top:570px;height:28px"></div>
<div class="t C" style="left:1756.5px;width:400px;top:574.16px;color:#4b4b80"><span class="sx" style="font-size:13.39px;transform:scaleX(1.1129)">note</span></div>
<svg class="abs" style="left:1562px;top:577px" width="14" height="14" viewBox="0 0 14 14" fill="none" stroke="#33338a" stroke-width="1"><rect x=".6" y=".6" width="12.800" height="12.800" rx="1" stroke="#8c8cc0" stroke-width="1.200"/><path d="M7 3.700v6.600M3.700 7h6.600" stroke-width="1.600"/></svg>
</body></html>
